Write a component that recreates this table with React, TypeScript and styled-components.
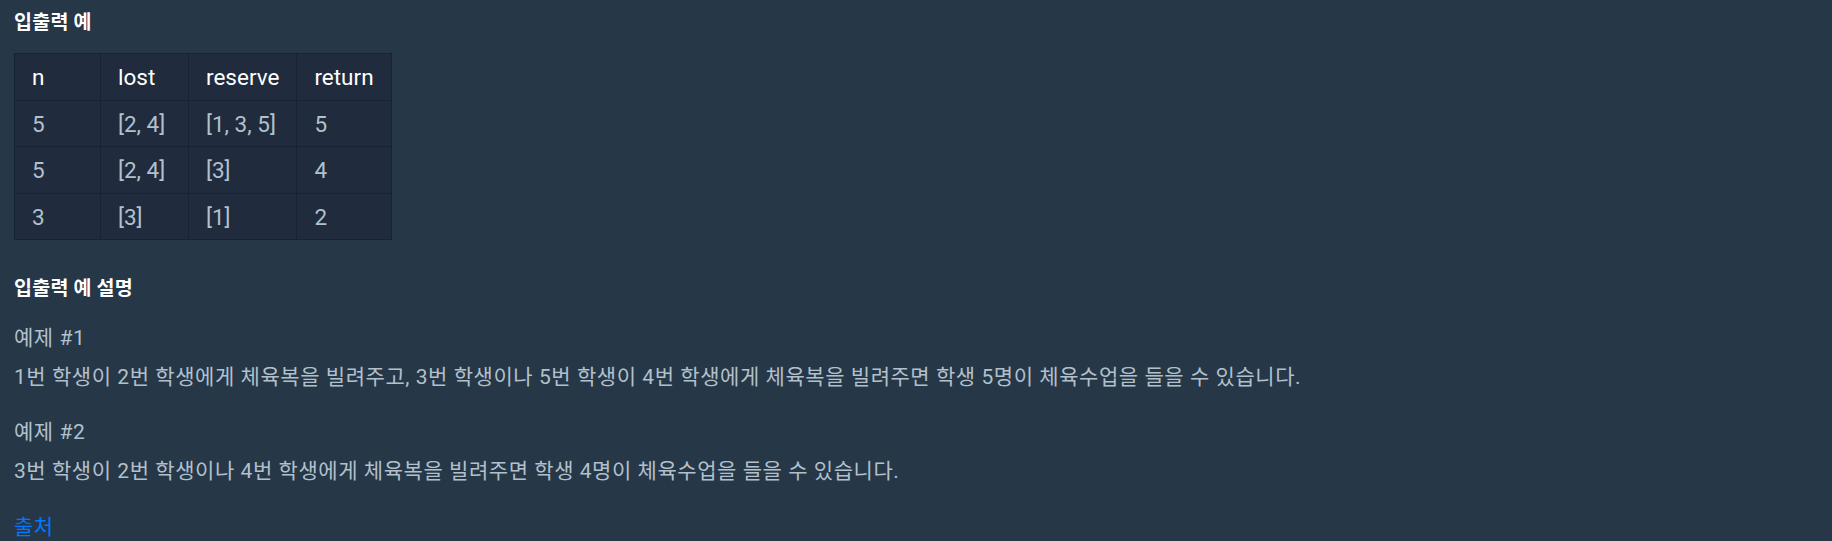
import styled, { createGlobalStyle } from 'styled-components'

const GlobalStyle = createGlobalStyle`
  html, body {
    margin: 0;
    background: #263747;
  }
  body {
    font-family: Roboto, "Noto Sans CJK KR", sans-serif;
  }
`

const Page = styled.div`
  padding: 0 14px;
  color: #b2c0cc;
`

const Heading = styled.h5<{ $gap: number }>`
  margin: ${p => p.$gap}px 0 0;
  font-family: "Noto Sans CJK KR", sans-serif;
  font-size: 19.5px;
  font-weight: 700;
  letter-spacing: 0.3px;
  line-height: 26px;
  color: #ffffff;
`

const Table = styled.table`
  margin-top: 19px;
  border-collapse: collapse;
  font-family: Roboto, "Noto Sans CJK KR", sans-serif;
  font-size: 22.5px;
  line-height: 24px;
`

const Cell = styled.td<{ $head?: boolean, $width?: number }>`
  width: ${p => (p.$width ? `${p.$width}px` : 'auto')};
  padding: 11px 17px 10.5px;
  background: #202b3d;
  border: 1px solid #172334;
  color: ${p => (p.$head ? '#ffffff' : '#b2c0cc')};
  font-weight: 400;
  text-align: left;
  white-space: nowrap;
`

const Paragraph = styled.p<{ $gap: number }>`
  margin: ${p => p.$gap}px 0 0;
  font-family: Roboto, "Noto Sans CJK KR", sans-serif;
  font-size: 21px;
  letter-spacing: 0.55px;
  line-height: 38.5px;
`

const SourceLink = styled.a`
  color: #0078ff;
  text-decoration: none;
`

const HEAD = [
  { label: 'n', width: 51 },
  { label: 'lost', width: 53 },
  { label: 'reserve', width: 73 },
  { label: 'return', width: 59 }
]

const ROWS = [
  ['5', '[2, 4]', '[1, 3, 5]', '5'],
  ['5', '[2, 4]', '[3]', '4'],
  ['3', '[3]', '[1]', '2']
]

export default function App () {
  return (
    <Page>
      <GlobalStyle />
      <Heading $gap={8}>입출력 예</Heading>
      <Table>
        <thead>
          <tr>
            {HEAD.map(h => <Cell as='th' $head $width={h.width} key={h.label}>{h.label}</Cell>)}
          </tr>
        </thead>
        <tbody>
          {ROWS.map((row, i) => (
            <tr key={i}>
              {row.map((v, j) => <Cell key={j}>{v}</Cell>)}
            </tr>
          ))}
        </tbody>
      </Table>
      <Heading $gap={34}>입출력 예 설명</Heading>
      <Paragraph $gap={19}>
        예제 #1<br />
        1번 학생이 2번 학생에게 체육복을 빌려주고, 3번 학생이나 5번 학생이 4번 학생에게 체육복을 빌려주면 학생 5명이 체육수업을 들을 수 있습니다.
      </Paragraph>
      <Paragraph $gap={17}>
        예제 #2<br />
        3번 학생이 2번 학생이나 4번 학생에게 체육복을 빌려주면 학생 4명이 체육수업을 들을 수 있습니다.
      </Paragraph>
      <Paragraph $gap={18}>
        <SourceLink href='#'>출처</SourceLink>
      </Paragraph>
    </Page>
  )
}
